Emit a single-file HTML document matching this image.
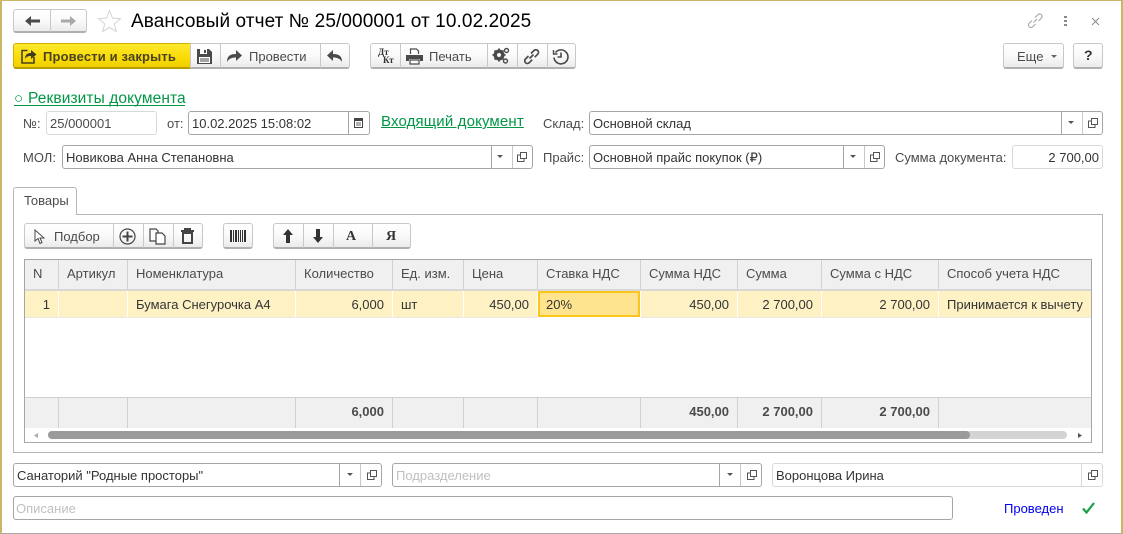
<!DOCTYPE html>
<html lang="ru"><head><meta charset="utf-8"><title>Авансовый отчет</title>
<style>
html,body{margin:0;padding:0;background:#fff}
#p{position:relative;width:1123px;height:534px;overflow:hidden;background:#fff;font:13px "Liberation Sans",Arial,sans-serif;color:#4b4b4b}
#p div,#p svg,#p a{position:absolute;box-sizing:border-box}
.t{white-space:nowrap;line-height:16px;margin-top:1px}
.r{text-align:right}
.b{height:26px;top:43px;background:linear-gradient(#fff 0,#fafafa 50%,#ebebeb 100%);border:1px solid #c8c8c8;border-bottom:2px solid #b0b0b0}
.f{border:1px solid #a6a6a6;border-radius:3px;background:#fff;height:24px}
.l{border-color:#d9d9d9}
.d{top:0;bottom:0;width:1px;background:#a6a6a6}
.g{color:#009646;text-decoration:underline;white-space:nowrap;line-height:18px;font-size:15px;letter-spacing:.15px}
.h{top:260px;height:29px;background:#f0f0f0;border-right:1px solid #d0d0d0}
.c{top:291px;height:27px;background:#fef2c5;border-right:1px solid #fff;border-bottom:1px solid #e8e8e8}
.s{top:398px;height:30px;background:#f0f0f0;border-right:1px solid #d0d0d0}
.v{font-weight:bold}
.ph{color:#c0c0c0}
</style></head><body><div id="p">
<div style="left:0;top:0;width:1123px;height:534px;border-top:1px solid #c9b766;border-left:2px solid #c9b766;border-right:2px solid #c9b766;border-bottom:1px solid #a8a8a8"></div>

<!-- nav -->
<div class="b" style="left:13px;top:9px;width:74px;height:24px;border-radius:3px"></div>
<div style="left:50px;top:10px;width:1px;height:22px;background:#c8c8c8"></div>
<svg style="left:25px;top:16px" width="15" height="10" viewBox="0 0 15 10"><path d="M0 5 6 0v3.500h9v3H6V10z" fill="#4a4a4a"/></svg>
<svg style="left:61px;top:16px" width="15" height="10" viewBox="0 0 15 10"><path d="M15 5 9 0v3.500H0v3h9V10z" fill="#a9a9a9"/></svg>
<svg style="left:97px;top:9px" width="25" height="24" viewBox="0 0 25 24"><path d="M12.500 1.500l3 7.600 8 .6-6.200 5.100 2 7.900-6.800-4.300-6.800 4.300 2-7.900L1.500 9.700l8-.6z" fill="#fff" stroke="#d4d4d4"/></svg>
<div class="t" style="left:131px;top:9px;font-size:19px;line-height:24px;color:#000;letter-spacing:.1px">Авансовый отчет № 25/000001 от 10.02.2025</div>
<svg style="left:1026px;top:12px" width="18" height="18" viewBox="0 0 18 18" fill="none" stroke="#a8a8a8" stroke-width="1.100"><path d="M7.500 10.500 11 7M6 8.500l-3 3a2.500 2.500 0 0 0 3.500 3.500l3-3M9 5.500l3-3a2.500 2.500 0 0 1 3.500 3.500l-3 3"/></svg>
<svg style="left:1064px;top:16px" width="4" height="12"><rect x="0" y="0" width="3" height="2" fill="#888"/><rect x="0" y="4" width="3" height="2" fill="#888"/><rect x="0" y="8" width="3" height="2" fill="#888"/></svg>
<svg style="left:1091px;top:17px" width="9" height="9" viewBox="0 0 9 9"><path d="M1 1l7 7M8 1 1 8" stroke="#888" fill="none"/></svg>

<!-- toolbar 1 -->
<div class="b" style="left:13px;width:178px;border-radius:3px 0 0 3px;background:linear-gradient(#ffe92e,#f7d900 70%,#f0cf00);border-color:#d0b000;border-bottom-color:#b99c00"></div>
<svg style="left:21px;top:48px" width="16" height="16" viewBox="0 0 16 16"><path d="M6.500 2.500H1v12.500h12V9" fill="none" stroke="#4a4020" stroke-width="1.600"/><path d="M4 11c0-5 3-6 6-6V2l5.500 4.500L10 11V8c-3 0-5 .8-6 3z" fill="#3f3a20"/></svg>
<div class="t" style="left:43px;top:48px;font-weight:bold;color:#4b4320;letter-spacing:.15px">Провести и закрыть</div>
<div class="b" style="left:190px;width:31px"></div>
<svg style="left:196px;top:48px" width="17" height="17" viewBox="0 0 17 17"><path d="M1 1h12l3 3v12H1z" fill="#4a4a4a"/><rect x="4" y="1" width="7" height="5" fill="#fff"/><rect x="8" y="2" width="2" height="3" fill="#4a4a4a"/><rect x="3" y="9" width="11" height="6" fill="#fff"/><path d="M4 11h9M4 13h9" stroke="#4a4a4a"/></svg>
<div class="b" style="left:220px;width:101px"></div>
<svg style="left:226px;top:49px" width="17" height="14" viewBox="0 0 17 14"><path d="M1 13c0-6 3-8 9-8V1l6 5.500L10 12V8.500C6 8.500 3 9.500 1 13z" fill="#4a4a4a"/></svg>
<div class="t" style="left:249px;top:48px">Провести</div>
<div class="b" style="left:320px;width:30px;border-radius:0 3px 3px 0"></div>
<svg style="left:326px;top:49px" width="17" height="14" viewBox="0 0 17 14"><path d="M16 13c0-6-3-8-9-8V1L1 6.500 7 12V8.500c4 0 7 1 9 4.500z" fill="#4a4a4a"/></svg>

<!-- toolbar 2 -->
<div class="b" style="left:370px;width:31px;border-radius:3px 0 0 3px"></div>
<div class="t" style="left:378px;top:46px;font:bold 9px/10px 'Liberation Serif',serif;color:#333">Дт</div>
<div class="t" style="left:383px;top:54px;font:bold 9px/10px 'Liberation Serif',serif;color:#333">Кт</div>
<div class="b" style="left:400px;width:88px"></div>
<svg style="left:406px;top:48px" width="17" height="17" viewBox="0 0 17 17"><path d="M4.500 6V1h6l2 2v3" fill="#fff" stroke="#4a4a4a" stroke-width="1.200"/><path d="M0 7h17v6h-3v-2H3v2H0z" fill="#4a4a4a"/><path d="M4 12h9v4H4z" fill="#fff" stroke="#4a4a4a" stroke-width="1.200"/></svg>
<div class="t" style="left:429px;top:48px">Печать</div>
<div class="b" style="left:487px;width:31px"></div>
<svg style="left:492px;top:47px" width="18" height="18" viewBox="0 0 18 18"><circle cx="7" cy="8" r="4" fill="none" stroke="#4a4a4a" stroke-width="3"/><path d="M7 1.500v13M.5 8h13M2.500 3.500l9 9M11.500 3.500l-9 9" stroke="#4a4a4a" stroke-width="1.800"/><circle cx="7" cy="8" r="2" fill="#f6f6f6"/><circle cx="14.500" cy="3.500" r="2" fill="none" stroke="#4a4a4a" stroke-width="1.400"/><circle cx="13.500" cy="14" r="2" fill="none" stroke="#4a4a4a" stroke-width="1.400"/></svg>
<div class="b" style="left:517px;width:31px"></div>
<svg style="left:523px;top:48px" width="17" height="17" viewBox="0 0 17 17" fill="none" stroke="#4a4a4a" stroke-width="1.700"><path d="M6.500 10.500 10.500 6.500M5.500 8 2.500 11a2.600 2.600 0 0 0 3.700 3.700l3-3M8 5.500l3-3a2.600 2.600 0 0 1 3.700 3.700l-3 3"/></svg>
<div class="b" style="left:547px;width:29px;border-radius:0 3px 3px 0"></div>
<svg style="left:552px;top:48px" width="18" height="17" viewBox="0 0 18 17" fill="none" stroke="#4a4a4a" stroke-width="1.600"><path d="M3.500 4.500a7 7 0 1 1-1.500 5"/><path d="M1.500 2v4h4" stroke-width="1.400"/><path d="M9 4.500v4.500H5.500"/></svg>
<div class="b" style="left:1003px;width:61px;border-radius:3px"></div>
<div class="t" style="left:1017px;top:48px">Еще</div>
<svg style="left:1051px;top:55px" width="6" height="3"><path d="M0 0h6L3 3z" fill="#666"/></svg>
<div class="b" style="left:1073px;width:30px;border-radius:3px"></div>
<div class="t" style="left:1084px;top:46px;font-weight:bold;font-size:14px;color:#333">?</div>

<!-- link -->
<div class="g" style="left:14px;top:89px;width:171px;height:17px;line-height:19px;font-size:15.500px;text-decoration:none;border-bottom:1px solid #009646;letter-spacing:.1px"><span style="font-size:15px;position:absolute;left:0;top:0">○</span><span style="position:absolute;left:14px;top:0">Реквизиты документа</span></div>

<!-- row 1 -->
<div class="t" style="left:23px;top:115px">№:</div>
<div class="f l" style="left:46px;top:111px;width:111px"></div>
<div class="t" style="left:50px;top:115px">25/000001</div>
<div class="t" style="left:167px;top:115px">от:</div>
<div class="f" style="left:188px;top:111px;width:182px"><div class="d" style="left:159px"></div></div>
<div class="t" style="left:192px;top:115px;color:#333">10.02.2025 15:08:02</div>
<svg style="left:354px;top:117px" width="9" height="11"><rect x=".5" y="2.500" width="8" height="8" fill="none" stroke="#444"/><rect x="0" y="1" width="9" height="3" fill="#444"/><path d="M2 6h5M2 8h5" stroke="#666"/></svg>
<a class="g" style="left:381px;top:113px">Входящий документ</a>
<div class="t" style="left:543px;top:115px">Склад:</div>
<div class="f" style="left:589px;top:111px;width:514px"><div class="d" style="left:471px"></div><div class="d" style="left:492px;background:#c8c8c8"></div></div>
<div class="t" style="left:593px;top:115px;color:#333">Основной склад</div>
<svg style="left:1068px;top:121px" width="6" height="3"><path d="M0 0h6L3 3z" fill="#555"/></svg>
<svg style="left:1088px;top:118px" width="10" height="10" fill="none" stroke="#555"><path d="M3.500.5h6v6h-6zM3.500 3H.5v6.500H7V7"/></svg>

<!-- row 2 -->
<div class="t" style="left:23px;top:149px">МОЛ:</div>
<div class="f" style="left:62px;top:145px;width:471px"><div class="d" style="left:428px"></div><div class="d" style="left:449px;background:#c8c8c8"></div></div>
<div class="t" style="left:66px;top:149px;color:#333">Новикова Анна Степановна</div>
<svg style="left:497px;top:155px" width="6" height="3"><path d="M0 0h6L3 3z" fill="#555"/></svg>
<svg style="left:517px;top:152px" width="10" height="10" fill="none" stroke="#555"><path d="M3.500.5h6v6h-6zM3.500 3H.5v6.500H7V7"/></svg>
<div class="t" style="left:543px;top:149px">Прайс:</div>
<div class="f" style="left:589px;top:145px;width:296px"><div class="d" style="left:253px"></div><div class="d" style="left:274px;background:#c8c8c8"></div></div>
<div class="t" style="left:593px;top:149px;color:#333">Основной прайс покупок (₽)</div>
<svg style="left:850px;top:155px" width="6" height="3"><path d="M0 0h6L3 3z" fill="#555"/></svg>
<svg style="left:870px;top:152px" width="10" height="10" fill="none" stroke="#555"><path d="M3.500.5h6v6h-6zM3.500 3H.5v6.500H7V7"/></svg>
<div class="t" style="left:895px;top:149px">Сумма документа:</div>
<div class="f l" style="left:1012px;top:145px;width:91px"></div>
<div class="t r" style="right:24px;top:149px;color:#333">2 700,00</div>

<!-- tab panel -->
<div style="left:13px;top:214px;width:1090px;height:239px;border:1px solid #b5b5b5"></div>
<div style="left:13px;top:187px;width:64px;height:28px;background:#fff;border:1px solid #b5b5b5;border-bottom:0;border-radius:3px 3px 0 0"></div>
<div class="t" style="left:24px;top:192px">Товары</div>

<!-- table toolbar -->
<div class="b" style="left:24px;top:223px;width:90px;border-radius:3px 0 0 3px"></div>
<svg style="left:34px;top:229px" width="11" height="16" viewBox="0 0 11 16"><path d="M1 1v11l3-2.500 2 5 2-1-2-4.500h4z" fill="#fff" stroke="#4a4a4a"/></svg>
<div class="t" style="left:54px;top:228px">Подбор</div>
<div class="b" style="left:113px;top:223px;width:31px"></div>
<svg style="left:119px;top:228px" width="17" height="17" viewBox="0 0 17 17" fill="none" stroke="#444"><circle cx="8.500" cy="8.500" r="7.500" stroke-width="1.200"/><path d="M8.500 3.500v10M3.500 8.500h10" stroke-width="2"/></svg>
<div class="b" style="left:143px;top:223px;width:31px"></div>
<svg style="left:149px;top:228px" width="17" height="17" viewBox="0 0 17 17" fill="#fff" stroke="#444" stroke-width="1.200"><path d="M1 1h6l2 2v10H1z"/><path d="M7 5h6l3 3v8H7z"/></svg>
<div class="b" style="left:173px;top:223px;width:30px;border-radius:0 3px 3px 0"></div>
<svg style="left:180px;top:228px" width="15" height="17" viewBox="0 0 15 17"><path d="M1 3h13M5 3V1h5v2" stroke="#444" stroke-width="2" fill="none"/><path d="M3 5h9v10H3z" fill="none" stroke="#444" stroke-width="2"/></svg>
<div class="b" style="left:223px;top:223px;width:30px;border-radius:3px"></div>
<svg style="left:230px;top:230px" width="16" height="12" fill="#333"><rect x="0" width="2" height="12"/><rect x="3" width="1" height="12"/><rect x="5" width="2" height="12"/><rect x="8" width="1" height="12"/><rect x="10" width="1" height="12"/><rect x="12" width="1" height="12"/><rect x="14" width="2" height="12"/></svg>
<div class="b" style="left:273px;top:223px;width:31px;border-radius:3px 0 0 3px"></div>
<svg style="left:282px;top:229px" width="12" height="14"><path d="M6 0l5 6H8v8H4V6H1z" fill="#333"/></svg>
<div class="b" style="left:303px;top:223px;width:31px"></div>
<svg style="left:312px;top:229px" width="12" height="14"><path d="M6 14 1 8h3V0h4v8h3z" fill="#333"/></svg>
<div class="b" style="left:333px;top:223px;width:40px"></div>
<div class="t" style="left:346px;top:228px;font:bold 14px/16px 'Liberation Serif',serif;color:#333">А</div>
<div class="b" style="left:372px;top:223px;width:39px;border-radius:0 3px 3px 0"></div>
<div class="t" style="left:386px;top:228px;font:bold 14px/16px 'Liberation Serif',serif;color:#333">Я</div>

<!-- table -->
<div style="left:24px;top:259px;width:1068px;height:184px;border:1px solid #a6a6a6;background:#fff"></div>
<div style="left:25px;top:289px;width:1066px;height:2px;background:#d8d8d8"></div>
<div class="h" style="left:25px;width:34px"></div><div class="h" style="left:59px;width:69px"></div><div class="h" style="left:128px;width:168px"></div><div class="h" style="left:296px;width:97px"></div><div class="h" style="left:393px;width:71px"></div><div class="h" style="left:464px;width:74px"></div><div class="h" style="left:538px;width:103px"></div><div class="h" style="left:641px;width:97px"></div><div class="h" style="left:738px;width:84px"></div><div class="h" style="left:822px;width:117px"></div><div class="h" style="left:939px;width:152px;border-right:0"></div>
<div class="t" style="left:33px;top:265px">N</div><div class="t" style="left:67px;top:265px">Артикул</div><div class="t" style="left:136px;top:265px">Номенклатура</div><div class="t" style="left:304px;top:265px">Количество</div><div class="t" style="left:401px;top:265px">Ед. изм.</div><div class="t" style="left:472px;top:265px">Цена</div><div class="t" style="left:546px;top:265px">Ставка НДС</div><div class="t" style="left:649px;top:265px">Сумма НДС</div><div class="t" style="left:746px;top:265px">Сумма</div><div class="t" style="left:830px;top:265px">Сумма с НДС</div><div class="t" style="left:947px;top:265px">Способ учета НДС</div>

<div class="c" style="left:25px;width:34px"></div><div class="c" style="left:59px;width:69px"></div><div class="c" style="left:128px;width:168px"></div><div class="c" style="left:296px;width:97px"></div><div class="c" style="left:393px;width:71px"></div><div class="c" style="left:464px;width:74px"></div><div class="c" style="left:641px;width:97px"></div><div class="c" style="left:738px;width:84px"></div><div class="c" style="left:822px;width:117px"></div><div class="c" style="left:939px;width:152px;border-right:0"></div>
<div style="left:538px;top:291px;width:102px;height:26px;background:#fee48f;border:2px solid #fac61e"></div>
<div class="t r" style="right:1073px;top:296px;color:#333">1</div>
<div class="t" style="left:136px;top:296px;color:#333">Бумага Снегурочка А4</div>
<div class="t r" style="right:739px;top:296px;color:#333">6,000</div>
<div class="t" style="left:401px;top:296px;color:#333">шт</div>
<div class="t r" style="right:594px;top:296px;color:#333">450,00</div>
<div class="t" style="left:546px;top:296px;color:#333">20%</div>
<div class="t r" style="right:394px;top:296px;color:#333">450,00</div>
<div class="t r" style="right:310px;top:296px;color:#333">2 700,00</div>
<div class="t r" style="right:193px;top:296px;color:#333">2 700,00</div>
<div class="t" style="left:947px;top:296px;color:#333">Принимается к вычету</div>

<div class="s" style="left:25px;width:34px"></div><div class="s" style="left:59px;width:69px"></div><div class="s" style="left:128px;width:168px"></div><div class="s" style="left:296px;width:97px"></div><div class="s" style="left:393px;width:71px"></div><div class="s" style="left:464px;width:74px"></div><div class="s" style="left:538px;width:103px"></div><div class="s" style="left:641px;width:97px"></div><div class="s" style="left:738px;width:84px"></div><div class="s" style="left:822px;width:117px"></div><div class="s" style="left:939px;width:152px;border-right:0"></div>
<div style="left:25px;top:397px;width:1066px;height:1px;background:#d0d0d0"></div>
<div class="t r v" style="right:739px;top:403px">6,000</div>
<div class="t r v" style="right:394px;top:403px">450,00</div>
<div class="t r v" style="right:310px;top:403px">2 700,00</div>
<div class="t r v" style="right:193px;top:403px">2 700,00</div>

<!-- scrollbar -->
<div style="left:48px;top:431px;width:1019px;height:8px;background:#d4d4d4;border-radius:4px"></div>
<div style="left:48px;top:431px;width:922px;height:8px;background:#9b9b9b;border-radius:4px"></div>
<svg style="left:34px;top:433px" width="4" height="5"><path d="M4 0v5L0 2.500z" fill="#aaa"/></svg>
<svg style="left:1078px;top:433px" width="4" height="5"><path d="M0 0v5l4-2.500z" fill="#555"/></svg>

<!-- bottom fields -->
<div class="f" style="left:13px;top:463px;width:369px"><div class="d" style="left:325px"></div><div class="d" style="left:346px;background:#c8c8c8"></div></div>
<div class="t" style="left:17px;top:467px;color:#333">Санаторий "Родные просторы"</div>
<svg style="left:347px;top:473px" width="6" height="3"><path d="M0 0h6L3 3z" fill="#555"/></svg>
<svg style="left:367px;top:470px" width="10" height="10" fill="none" stroke="#555"><path d="M3.500.5h6v6h-6zM3.500 3H.5v6.500H7V7"/></svg>
<div class="f" style="left:392px;top:463px;width:370px"><div class="d" style="left:326px"></div><div class="d" style="left:347px;background:#c8c8c8"></div></div>
<div class="t ph" style="left:396px;top:467px">Подразделение</div>
<svg style="left:727px;top:473px" width="6" height="3"><path d="M0 0h6L3 3z" fill="#555"/></svg>
<svg style="left:747px;top:470px" width="10" height="10" fill="none" stroke="#555"><path d="M3.500.5h6v6h-6zM3.500 3H.5v6.500H7V7"/></svg>
<div class="f l" style="left:772px;top:463px;width:331px"><div class="d" style="left:308px;background:#d9d9d9"></div></div>
<div class="t" style="left:776px;top:467px;color:#333">Воронцова Ирина</div>
<svg style="left:1088px;top:470px" width="10" height="10" fill="none" stroke="#555"><path d="M3.500.5h6v6h-6zM3.500 3H.5v6.500H7V7"/></svg>
<div class="f" style="left:13px;top:496px;width:940px"></div>
<div class="t ph" style="left:16px;top:500px">Описание</div>
<div class="t" style="left:1004px;top:500px;color:#0000f0">Проведен</div>
<svg style="left:1082px;top:502px" width="13" height="12" viewBox="0 0 13 12"><path d="M1 6.500 4.500 10.500 12 1" fill="none" stroke="#16a04a" stroke-width="2.200"/></svg>
</div></body></html>
